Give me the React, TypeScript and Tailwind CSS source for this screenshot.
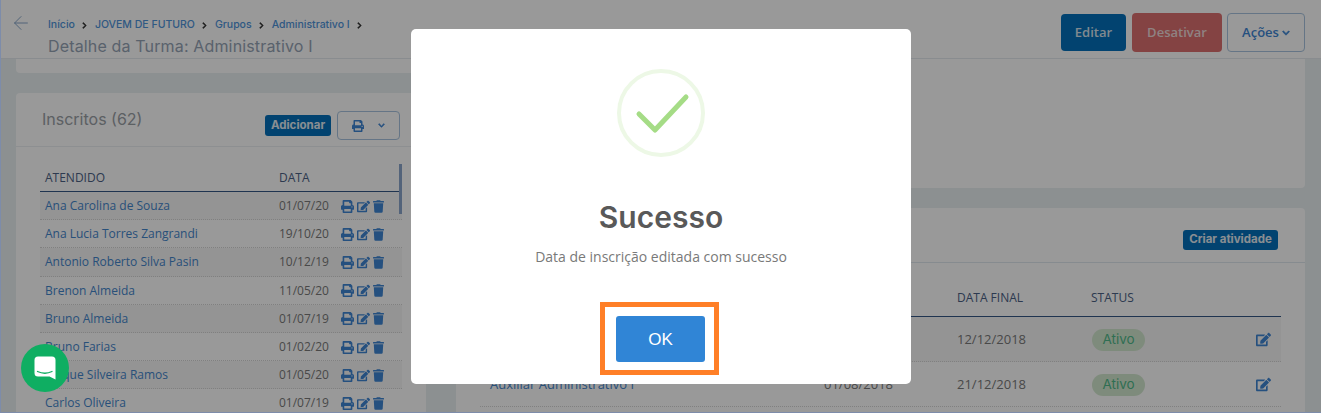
// App.tsx
import React from "react";
import { ArrowLeft } from "lucide-react";
import { FaChevronDown, FaChevronRight, FaEdit, FaPrint, FaTrash } from "react-icons/fa";

const inscritos = [
  { nome: "Ana Carolina de Souza", data: "01/07/20" },
  { nome: "Ana Lucia Torres Zangrandi", data: "19/10/20" },
  { nome: "Antonio Roberto Silva Pasin", data: "10/12/19" },
  { nome: "Brenon Almeida", data: "11/05/20" },
  { nome: "Bruno Almeida", data: "01/07/19" },
  { nome: "Bruno Farias", data: "01/02/20" },
  { nome: "Caíque Silveira Ramos", data: "01/05/20" },
  { nome: "Carlos Oliveira", data: "01/07/19" },
];

const atividades = [
  { nome: "", inicio: "", fim: "12/12/2018" },
  { nome: "Auxiliar Administrativo I", inicio: "01/08/2018", fim: "21/12/2018" },
];

const breadcrumbs = ["Início", "JOVEM DE FUTURO", "Grupos", "Administrativo I"];

function Header() {
  return (
    <header className="flex h-[59px] shrink-0 items-start justify-between border-b border-[#e4eaee] bg-white pr-[16px] pl-[10px] font-['Inter',sans-serif]">
      <div className="flex pt-[12px]">
        <ArrowLeft className="h-[22px] w-[22px] shrink-0 text-[#7f9fc4]" strokeWidth={1} />
        <div className="ml-[16px] pt-[6px]">
          <div className="flex items-center text-[10.5px] leading-[14px] font-medium text-[#4f94da]">
            {breadcrumbs.map((b) => (
              <React.Fragment key={b}>
                <span>{b}</span>
                <FaChevronRight className="mx-[6.5px] h-[7px] w-[7px] stroke-current stroke-[30px] text-[#333]" />
              </React.Fragment>
            ))}
          </div>
          <h1 className="mt-[4px] text-[16px] leading-[20px] tracking-[0.15px] text-[#95a3b5]">
            Detalhe da Turma: Administrativo I
          </h1>
        </div>
      </div>
      <div className="flex items-center pt-[13px] font-['Open_Sans',sans-serif] text-[13px] font-semibold">
        <button className="h-[37px] w-[65px] rounded-[4px] bg-[#0471bb] text-[#d8e4ee]">Editar</button>
        <button className="ml-[6px] h-[39px] w-[90px] rounded-[4px] bg-[#dd7070] text-[#eed9d9]">Desativar</button>
        <button className="ml-[5px] flex h-[39px] w-[78px] items-center justify-center gap-[3px] rounded-[4px] border border-[#a9c4e0] bg-white text-[#3f86d4]">
          Ações <FaChevronDown className="h-[8px] w-[8px] stroke-current stroke-[40px]" />
        </button>
      </div>
    </header>
  );
}

function InscritosCard() {
  return (
    <section className="mt-[20px] min-h-0 flex-1 overflow-hidden rounded-t-[4px] bg-white">
      <div className="flex h-[54px] items-start border-b border-[#eceff2] pr-[26px] pl-[26px]">
        <h2 className="mt-[16px] font-['Inter',sans-serif] text-[16px] leading-[20px] text-[#9aa0a6]">Inscritos (62)</h2>
        <button className="mt-[22px] ml-auto h-[21px] w-[66px] rounded-[3px] bg-[#0471bb] font-['Inter',sans-serif] text-[11.5px] font-bold text-[#e4edf4]">
          Adicionar
        </button>
        <button className="mt-[18px] ml-[6px] flex h-[29px] w-[63px] items-center justify-center gap-[14px] rounded-[4px] border border-[#a9c4e0] text-[#3f86d4]">
          <FaPrint className="h-[12px] w-[12px]" />
          <FaChevronDown className="h-[7px] w-[7px] stroke-current stroke-[40px]" />
        </button>
      </div>
      <div className="relative mt-[18px] mr-[24px] ml-[24px] font-['Open_Sans',sans-serif] text-[12px]">
        <div className="absolute top-[-1px] right-0 h-[50px] w-[3px] bg-[#8aa5cc]" />
        <div className="grid h-[27px] grid-cols-[234px_1fr] items-center border-b border-[#345885] pl-[5px] font-medium text-[#4b6185]">
          <span>ATENDIDO</span>
          <span>DATA</span>
        </div>
        {inscritos.map((p, i) => (
          <div
            key={p.nome}
            className={`grid h-[28.2px] grid-cols-[234px_1fr] items-center border-b border-dotted border-[#d6d6d6] pt-[1px] pl-[5px] ${
              i % 2 === 0 ? "bg-[#f7f7f7]" : "bg-white"
            }`}
          >
            <span className="text-[#4486cc]">{p.nome}</span>
            <div className="flex items-center">
              <span className="w-[62px] text-[#7a7a7a]">{p.data}</span>
              <div className="flex items-center gap-[3px] text-[#3f86d4]">
                <FaPrint className="h-[13px] w-[13px]" />
                <FaEdit className="h-[13px] w-[13px]" />
                <FaTrash className="h-[13px] w-[11px]" />
              </div>
            </div>
          </div>
        ))}
      </div>
    </section>
  );
}

function AtividadesCard() {
  return (
    <section className="mt-[20px] min-h-0 flex-1 overflow-hidden rounded-t-[4px] bg-white">
      <div className="flex h-[55px] items-start justify-end border-b border-[#dfe8ef] pr-[27px]">
        <button className="mt-[22px] h-[20px] w-[95px] rounded-[3px] bg-[#0471bb] font-['Inter',sans-serif] text-[11.5px] font-bold text-[#e4edf4]">
          Criar atividade
        </button>
      </div>
      <div className="mx-[24px] mt-[14px] font-['Open_Sans',sans-serif] text-[12px]">
        <div className="grid h-[40px] grid-cols-[344px_133px_134px_1fr] items-center border-b border-[#345885] pt-[3px] font-medium text-[#4b6185]">
          <span />
          <span />
          <span>DATA FINAL</span>
          <span>STATUS</span>
        </div>
        {atividades.map((a, i) => (
          <div
            key={a.fim}
            className={`grid h-[45px] grid-cols-[344px_133px_134px_1fr] items-center border-b border-dotted border-[#d6d6d6] pt-[1px] text-[13px] ${
              i === 0 ? "bg-[#f7f7f7]" : "bg-white"
            }`}
          >
            <span className="pl-[10px] text-[#4486cc]">{a.nome}</span>
            <span className="text-[#7a7a7a]">{a.inicio}</span>
            <span className="text-[#7a7a7a]">{a.fim}</span>
            <div className="flex items-center justify-between pr-[10px]">
              <span className="ml-[1px] flex h-[22px] w-[53px] items-center justify-center rounded-full bg-[#d3e8cf] font-['Inter',sans-serif] text-[13.5px] text-[#4fb98a]">
                Ativo
              </span>
              <FaEdit className="h-[15px] w-[15px] text-[#3f86d4]" />
            </div>
          </div>
        ))}
      </div>
    </section>
  );
}

function SuccessModal() {
  return (
    <div className="absolute inset-0 flex justify-center border-b border-l border-[#7d8caa] bg-black/40 pt-[29px]">
      <div className="flex h-[355px] w-[500px] flex-col items-center rounded-[5px] bg-white pt-[40px]">
        <svg viewBox="0 0 88 88" className="h-[88px] w-[88px]">
          <circle cx="44" cy="44" r="42" fill="none" stroke="#edf8e6" strokeWidth="4" />
          <path d="M22 45 L38 61 L69 28" fill="none" stroke="#a5dc86" strokeWidth="5" strokeLinecap="round" strokeLinejoin="round" />
        </svg>
        <h2 className="mt-[40px] font-['Inter',sans-serif] text-[30px] leading-[40px] font-semibold text-[#595959]">Sucesso</h2>
        <p className="mt-[10px] font-['Open_Sans',sans-serif] text-[14px] leading-[20px] text-[#797979]">
          Data de inscrição editada com sucesso
        </p>
        {/* orange frame drawn on the capture, not quite centred on the button */}
        <div className="mt-[35px] mr-[3px] border-[5px] border-[#ff7f27] pt-[9px] pr-[9px] pb-[8px] pl-[11px]">
          <button className="block h-[46px] w-[89px] rounded-[3px] bg-[#3085d6] pt-[1px] font-['Liberation_Sans',sans-serif] text-[17px] text-white">
            OK
          </button>
        </div>
      </div>
    </div>
  );
}

function ChatBubble() {
  return (
    <div className="absolute bottom-[21px] left-[21px] flex h-[48px] w-[48px] items-center justify-center rounded-full bg-[#0fae62]">
      <svg viewBox="0 0 22 24" className="h-[24px] w-[22px]">
        <path d="M4 0.5 H18 Q21.5 0.5 21.5 4 V23.5 L15.5 20.5 H4 Q0.5 20.5 0.5 17 V4 Q0.5 0.5 4 0.5 Z" fill="#fff" />
        <path d="M3.5 15.5 Q11 19 18 15.5" fill="none" stroke="#0fae62" strokeWidth="1.3" strokeLinecap="round" />
      </svg>
    </div>
  );
}

export default function App() {
  return (
    <div className="relative flex h-[413px] w-[1321px] flex-col overflow-hidden bg-[#e9f0f2]">
      <Header />
      <main className="flex min-h-0 flex-1 gap-[30px] overflow-hidden pr-[16px] pl-[16px]">
        <div className="flex w-[410px] flex-col">
          <div className="h-[14px] shrink-0 rounded-b-[4px] bg-white" />
          <InscritosCard />
        </div>
        <div className="flex flex-1 flex-col">
          <div className="h-[129px] shrink-0 rounded-b-[4px] bg-white" />
          <AtividadesCard />
        </div>
      </main>
      <SuccessModal />
      <ChatBubble />
    </div>
  );
}
